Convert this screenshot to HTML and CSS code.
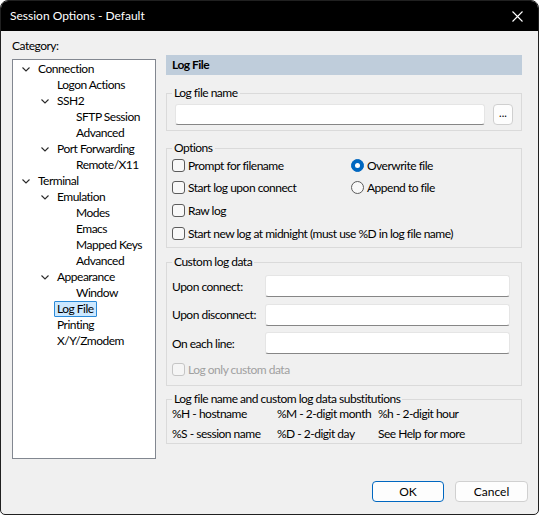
FILE: index.html
```html
<!DOCTYPE html>
<html lang="en">
<head>
<meta charset="utf-8">
<title>Session Options - Default</title>
<link rel="stylesheet" href="styles.css">
</head>
<body>
<div class="window">
  <div class="titlebar">
    <span class="title">Session Options - Default</span>
    <svg class="close" width="11" height="11" viewBox="0 0 11 11"><path d="M0.5 0.5 L10.5 10.5 M10.5 0.5 L0.5 10.5" stroke="#fff" stroke-width="1.1" fill="none"/></svg>
  </div>

  <div class="content">
    <div class="left">
      <div class="cat-label">Category:</div>
      <div class="tree">
        <div class="node l0"><span class="chev"><svg width="8" height="5" viewBox="0 0 8 5"><polyline points="0.5,0.5 4,4 7.5,0.5"/></svg></span><span class="lbl">Connection</span></div>
        <div class="node l1"><span class="chev"></span><span class="lbl">Logon Actions</span></div>
        <div class="node l1"><span class="chev"><svg width="8" height="5" viewBox="0 0 8 5"><polyline points="0.5,0.5 4,4 7.5,0.5"/></svg></span><span class="lbl">SSH2</span></div>
        <div class="node l2"><span class="chev"></span><span class="lbl">SFTP Session</span></div>
        <div class="node l2"><span class="chev"></span><span class="lbl">Advanced</span></div>
        <div class="node l1"><span class="chev"><svg width="8" height="5" viewBox="0 0 8 5"><polyline points="0.5,0.5 4,4 7.5,0.5"/></svg></span><span class="lbl">Port Forwarding</span></div>
        <div class="node l2"><span class="chev"></span><span class="lbl">Remote/X11</span></div>
        <div class="node l0"><span class="chev"><svg width="8" height="5" viewBox="0 0 8 5"><polyline points="0.5,0.5 4,4 7.5,0.5"/></svg></span><span class="lbl">Terminal</span></div>
        <div class="node l1"><span class="chev"><svg width="8" height="5" viewBox="0 0 8 5"><polyline points="0.5,0.5 4,4 7.5,0.5"/></svg></span><span class="lbl">Emulation</span></div>
        <div class="node l2"><span class="chev"></span><span class="lbl">Modes</span></div>
        <div class="node l2"><span class="chev"></span><span class="lbl">Emacs</span></div>
        <div class="node l2"><span class="chev"></span><span class="lbl">Mapped Keys</span></div>
        <div class="node l2"><span class="chev"></span><span class="lbl">Advanced</span></div>
        <div class="node l1"><span class="chev"><svg width="8" height="5" viewBox="0 0 8 5"><polyline points="0.5,0.5 4,4 7.5,0.5"/></svg></span><span class="lbl">Appearance</span></div>
        <div class="node l2"><span class="chev"></span><span class="lbl">Window</span></div>
        <div class="node l1"><span class="chev"></span><span class="lbl selected">Log File</span></div>
        <div class="node l1"><span class="chev"></span><span class="lbl">Printing</span></div>
        <div class="node l1"><span class="chev"></span><span class="lbl">X/Y/Zmodem</span></div>
      </div>
    </div>

    <div class="right">
      <div class="page-header">Log File</div>

      <fieldset class="group g-name">
        <legend>Log file name</legend>
        <div class="name-row">
          <div class="textbox wide"></div>
          <button class="browse">...</button>
        </div>
      </fieldset>

      <fieldset class="group g-options">
        <legend>Options</legend>
        <div class="opt-grid">
          <label class="check"><span class="box"></span>Prompt for filename</label>
          <label class="check"><span class="radio on"></span>Overwrite file</label>
          <label class="check"><span class="box"></span>Start log upon connect</label>
          <label class="check"><span class="radio"></span>Append to file</label>
          <label class="check span2"><span class="box"></span>Raw log</label>
          <label class="check span2"><span class="box"></span>Start new log at midnight (must use %D in log file name)</label>
        </div>
      </fieldset>

      <fieldset class="group g-custom">
        <legend>Custom log data</legend>
        <div class="custom-grid">
          <span class="field-label">Upon connect:</span><div class="textbox"></div>
          <span class="field-label">Upon disconnect:</span><div class="textbox"></div>
          <span class="field-label">On each line:</span><div class="textbox"></div>
        </div>
        <label class="check disabled"><span class="box"></span>Log only custom data</label>
      </fieldset>

      <fieldset class="group g-subs">
        <legend>Log file name and custom log data substitutions</legend>
        <div class="subs-grid">
          <span>%H - hostname</span><span>%M - 2-digit month</span><span>%h - 2-digit hour</span>
          <span>%S - session name</span><span>%D - 2-digit day</span><span>See Help for more</span>
        </div>
      </fieldset>
    </div>
  </div>

  <div class="footer">
    <button class="btn default">OK</button>
    <button class="btn">Cancel</button>
  </div>
</div>
</body>
</html>
```

FILE: styles.css
```css
* { box-sizing: border-box; }

html, body {
  margin: 0;
  background: #ffffff;
}

body {
  font-family: Lato, "Liberation Sans", sans-serif;
  font-size: 12px;
  letter-spacing: -0.5px;
  color: #000;
}

.window {
  width: 539px;
  height: 515px;
  border: 1px solid #202020;
  border-radius: 8px 8px 5px 5px;
  overflow: hidden;
  background: #f0f0f0;
  display: flex;
  flex-direction: column;
}

/* title bar */
.titlebar {
  height: 30px;
  background: #000;
  color: #fff;
  display: flex;
  align-items: center;
  padding: 0 10px 0 9px;
  flex: none;
  letter-spacing: normal;
}
.title { flex: 1; line-height: 16px; }
.close { margin-right: 5px; }

/* main area */
.content {
  display: grid;
  grid-template-columns: 144px 356px;
  column-gap: 10px;
  padding: 8px 0 0 11px;
}

.cat-label {
  line-height: 14px;
  margin-bottom: 6px;
}

.tree {
  height: 400px;
  background: #fff;
  border: 1px solid #828790;
  padding-top: 1px;
}

.node {
  height: 16px;
  display: flex;
  align-items: center;
  white-space: nowrap;
}
.node.l0 { padding-left: 9px; }
.node.l1 { padding-left: 28px; }
.node.l2 { padding-left: 47px; }

.chev {
  width: 13px;
  flex: none;
  display: flex;
  align-items: center;
}
.chev svg polyline {
  fill: none;
  stroke: #2b2b2b;
  stroke-width: 1.1;
}

.lbl {
  border: 1px solid transparent;
  padding: 0 2px;
  line-height: 14px;
}
.lbl.selected {
  background: #cce8ff;
  border-color: #2a8ad8;
  border-radius: 1px;
}

/* right side */
.right {
  padding-top: 16px;
  display: flex;
  flex-direction: column;
}

.page-header {
  height: 20px;
  background: #bfcddb;
  font-weight: bold;
  line-height: 20px;
  padding-left: 6px;
}

/* group boxes: legend sits 7px in from the frame */
.group {
  margin: 0;
  border: 1px solid #dadada;
  padding: 0;
  min-width: 0;
}
.group legend {
  padding: 0 2px;
  margin-left: 0;
  line-height: 14px;
}

.g-name { margin-top: 11px; padding: 4px 8px 5px 8px; }
.g-options { margin-top: 10px; padding: 2px 5px 6px 5px; }
.g-custom { margin-top: 7px; padding: 6px 11px 8px 5px; }
.g-subs { margin-top: 6px; padding: 0 5px 2px 5px; }

.g-name legend { margin-left: -3px; }

.name-row {
  display: flex;
  align-items: center;
  gap: 8px;
}

.textbox {
  height: 22px;
  background: #fff;
  border: 1px solid #e5e5e5;
  border-bottom-color: #868686;
  border-radius: 3px;
}
.textbox.wide { flex: 1; height: 21px; }

.browse {
  width: 20px;
  height: 21px;
  padding: 0 0 4px 0;
  border: 1px solid #cfcfcf;
  border-radius: 4px;
  background: #fdfdfd;
  font: inherit;
  font-size: 11px;
  line-height: 12px;
  letter-spacing: 0;
}

.opt-grid {
  display: grid;
  grid-template-columns: 179px 1fr;
  row-gap: 6.7px;
}
.span2 { grid-column: 1 / 3; }

.check {
  display: flex;
  align-items: center;
  height: 16px;
  white-space: nowrap;
}
.box {
  width: 13px;
  height: 13px;
  border: 1px solid #5c5c5c;
  border-radius: 3px;
  background: #f8f8f8;
  margin-right: 3px;
  flex: none;
}
.radio {
  width: 13px;
  height: 13px;
  border: 1px solid #5c5c5c;
  border-radius: 50%;
  background: #f8f8f8;
  margin-right: 3px;
  flex: none;
  display: flex;
  align-items: center;
  justify-content: center;
}
.radio.on {
  background: #0067c0;
  border-color: #0067c0;
}
.radio.on::after {
  content: "";
  width: 5px;
  height: 5px;
  border-radius: 50%;
  background: #fff;
}

.check.disabled { color: #a0a0a0; }
.check.disabled .box { border-color: #c5c5c5; background: #f5f5f5; }

.custom-grid {
  display: grid;
  grid-template-columns: 93px 1fr;
  row-gap: 6.5px;
  align-items: center;
  margin-bottom: 7px;
  white-space: nowrap;
}
.custom-grid .textbox { height: 22px; }

.subs-grid {
  display: grid;
  grid-template-columns: 105px 101px 1fr;
  row-gap: 5px;
  line-height: 15px;
  white-space: nowrap;
}

/* dialog buttons */
.footer {
  display: flex;
  justify-content: flex-end;
  gap: 11px;
  padding: 22px 10px 0 0;
}
.btn {
  width: 73px;
  height: 21px;
  border: 1px solid #d0d0d0;
  border-radius: 4px;
  background: #fdfdfd;
  font: inherit;
  color: #000;
  padding: 0;
}
.btn.default {
  border-color: #0067c0;
  width: 72px;
}
```
